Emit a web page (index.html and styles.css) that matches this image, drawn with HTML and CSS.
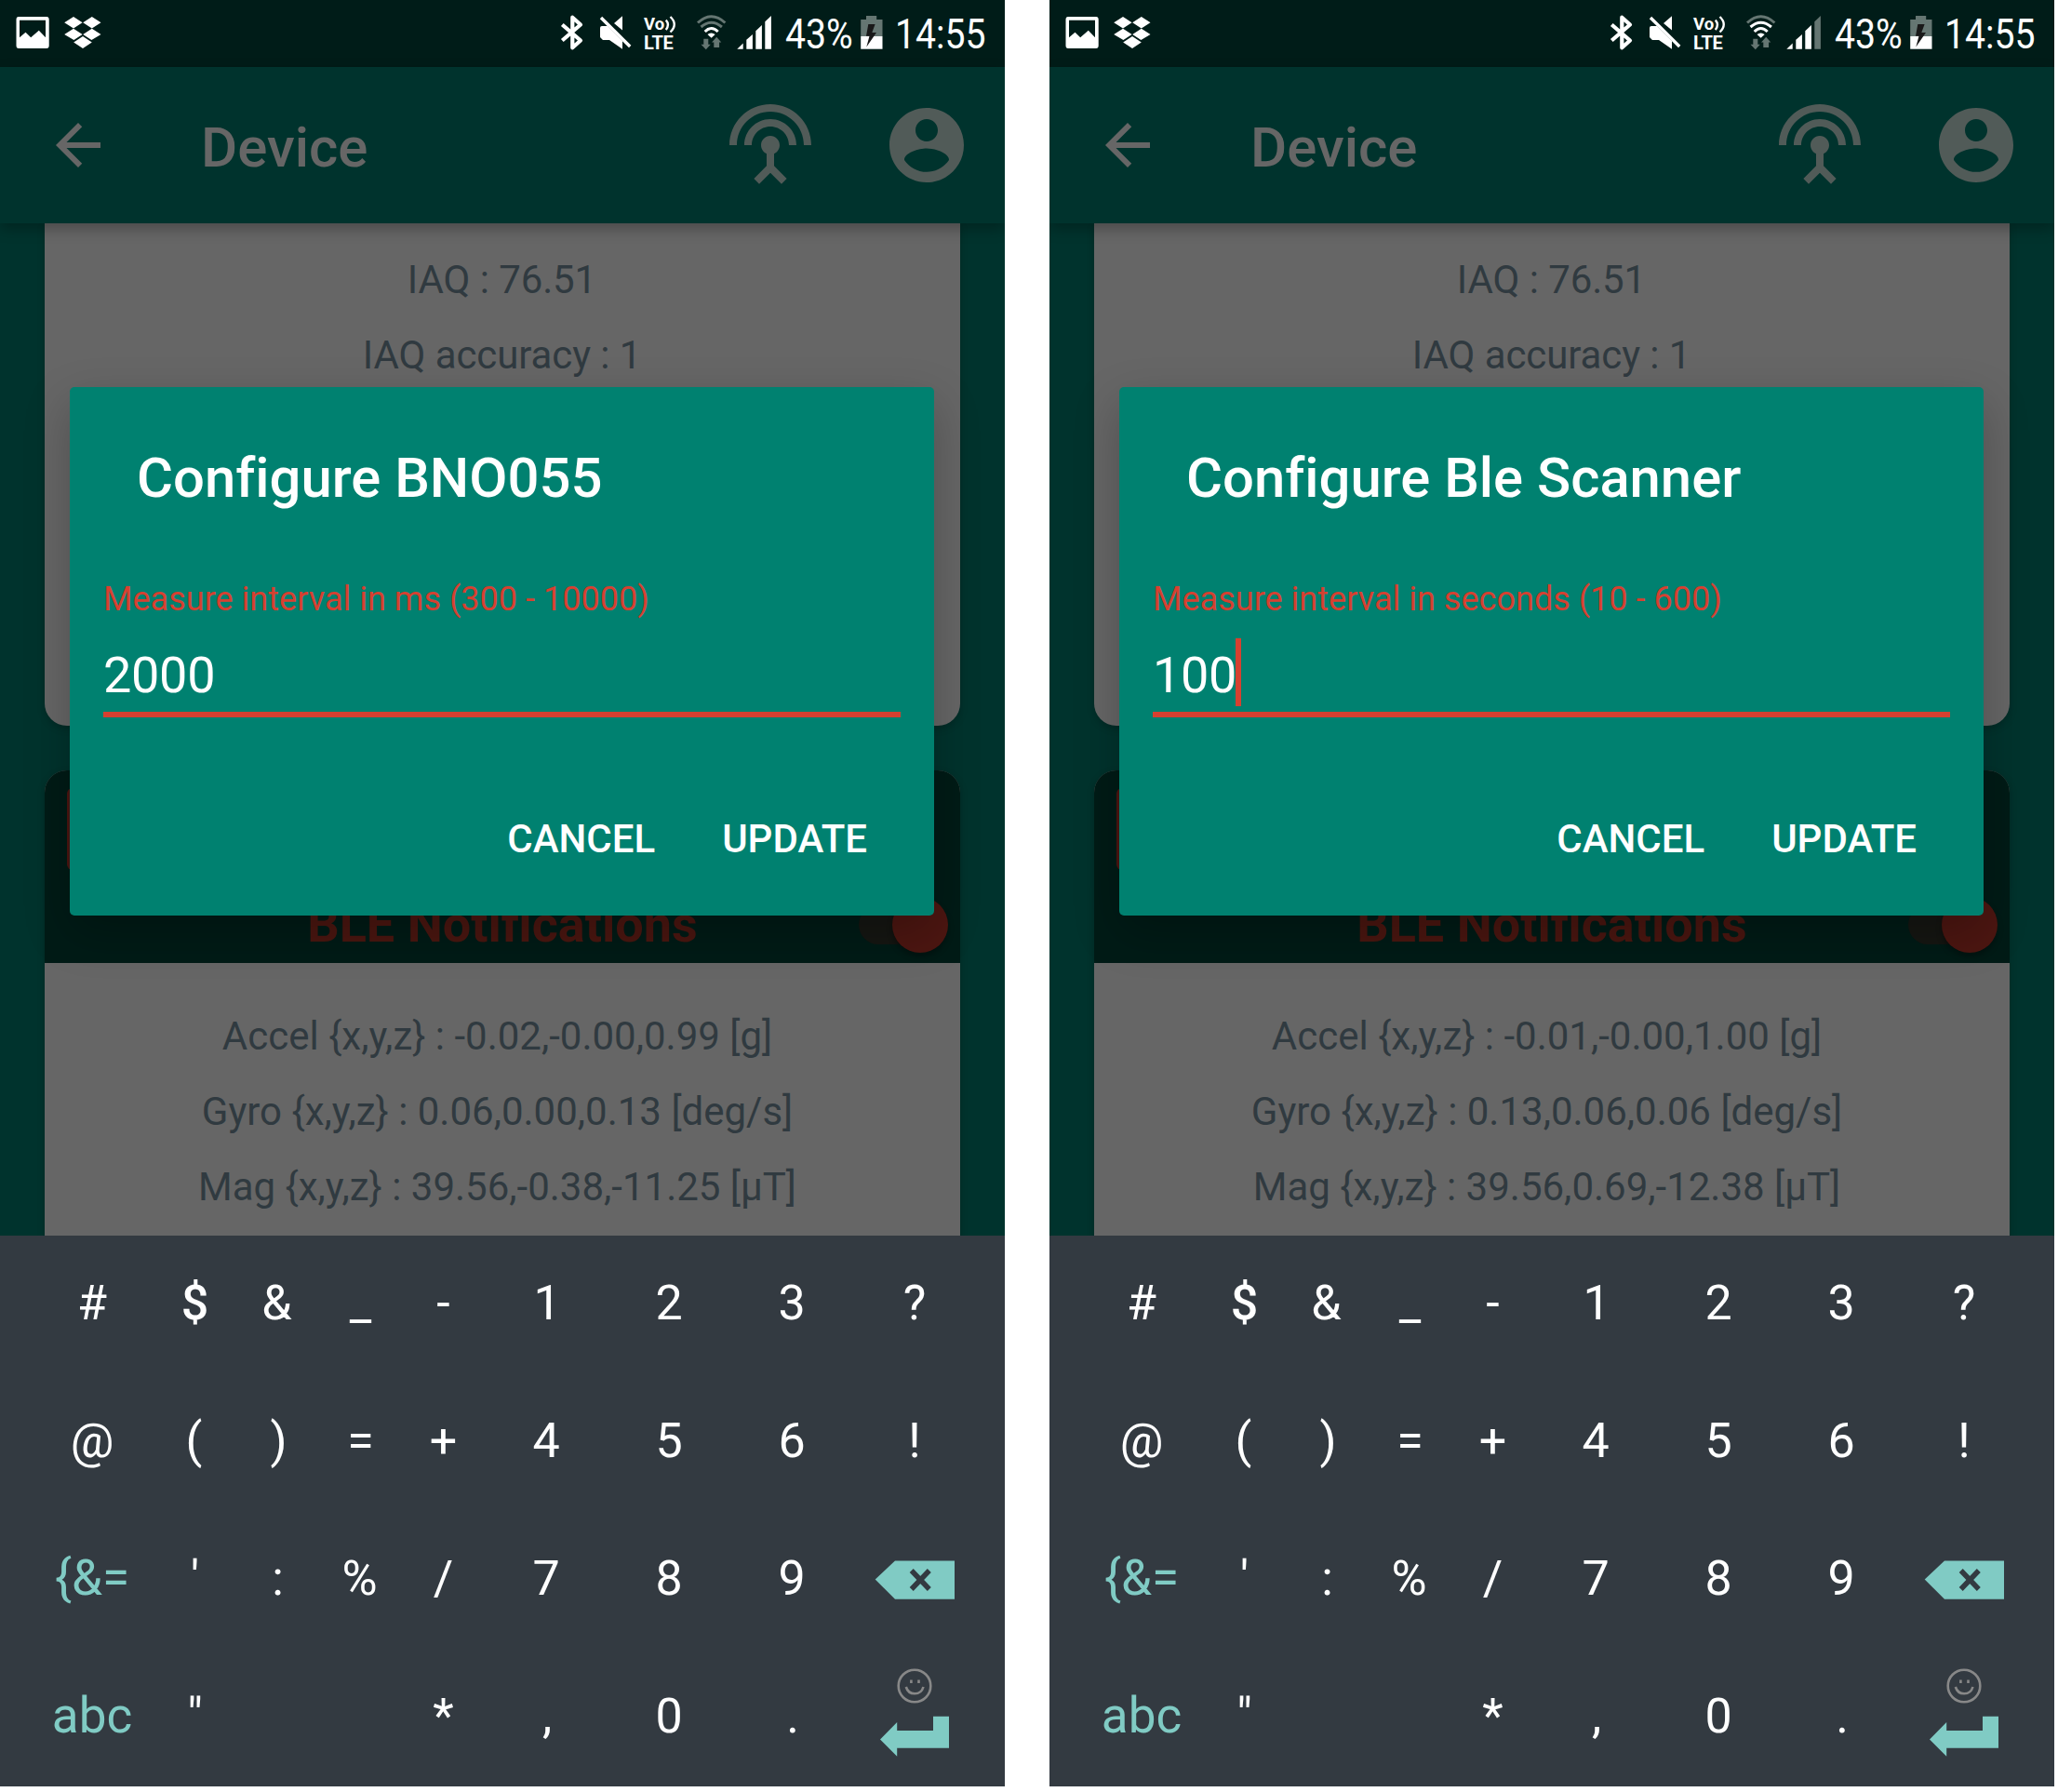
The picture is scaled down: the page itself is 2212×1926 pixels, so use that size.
FILE: index.html
```
<!DOCTYPE html>
<html lang="en">
<head>
<meta charset="utf-8">
<title>Device</title>
<link rel="stylesheet" href="styles.css">
</head>
<body>
<svg class="sprite" aria-hidden="true">
  <symbol id="notif" viewBox="0 0 120 72">
    <path fill-rule="evenodd" d="M20 18H50Q52.7 18 52.7 21V49Q52.7 52 50 52H20Q17.5 52 17.5 49V21Q17.5 18 20 18ZM21 21.7V40.3L27.5 34.7L33.2 40.3L41.8 32.7L49 40.3V21.7Z"/>
    <path d="M79 18L88.6 24.3L79 30.6L69.2 24.3ZM98.8 18L108.5 24.3L98.8 30.6L89.2 24.3ZM79 30.8L88.6 37L79.4 43L69.2 37ZM98.8 30.8L108.5 37L98.4 43L89.2 37ZM89 39L98.8 45.5L89 52L79.2 45.5Z"/>
  </symbol>
  <symbol id="bt" viewBox="596 0 40 72">
    <path fill="none" stroke="currentColor" stroke-width="4.2" stroke-linejoin="round" d="M604.3 26.500L624 43.500L615.300 51.300V18.700L624 26.500L604.3 43.500"/>
  </symbol>
  <symbol id="mute" viewBox="636 0 50 72">
    <path d="M669 17.3V32.6L660 25ZM645 30Q645 28 647 28H653L669 44V52.7L655 43H648L645 40Z"/>
    <path fill="none" stroke="currentColor" stroke-width="3.4" d="M646 19L677.2 50"/>
  </symbol>
  <symbol id="wifi" viewBox="740 0 48 72">
    <g fill="none" stroke-width="3">
      <path class="dim-line" d="M750 24.500Q764.6 11 779.4 24.500"/>
      <path class="wifi-mid" d="M753.500 29Q764.6 19.500 775.900 29"/>
      <path stroke="currentColor" d="M757.700 34Q764.6 27 771.700 34"/>
    </g>
    <path d="M764.6 40.700L760.500 37Q764.6 33.800 768.700 37Z"/>
    <path class="dim" d="M756.300 41.700H761.300V47.700H763.800L758.800 53.300L753.500 47.700H756.300ZM767.300 51V45.500H765L770.200 39.700L775.300 45.500H773.100V51Z"/>
  </symbol>
  <symbol id="signal" viewBox="788 0 48 72">
    <path d="M792.300 52.700L798.700 46.500V52.700ZM802.300 52.700V42.700L808.900 37V52.700ZM812.300 52.700V33.300L818.900 27V52.700Z"/>
    <path class="bar4" d="M822.300 52.700V23.300L828.900 17V52.700Z"/>
  </symbol>
  <symbol id="battery" viewBox="920 0 34 72">
    <path class="dim" d="M931 17H942.200V21H948.500V39H925.200V21H931Z"/>
    <path d="M925.200 39H948.500V52.700H925.200Z"/>
    <path class="bolt" d="M933.300 26H940.600L937.300 35H942L931.300 50.500L934.500 38.700H931Z"/>
  </symbol>
  <symbol id="back" viewBox="0 0 24 24"><path d="M20 11H7.83l5.59-5.59L12 4l-8 8 8 8 1.41-1.41L7.83 13H20v-2z"/></symbol>
  <symbol id="antenna" viewBox="0 0 24 24"><path d="M12 5c-3.87 0-7 3.130-7 7h2c0-2.760 2.240-5 5-5s5 2.240 5 5h2c0-3.870-3.130-7-7-7zm1 9.290c.880-.390 1.500-1.260 1.500-2.290 0-1.380-1.120-2.500-2.500-2.500S9.500 10.620 9.500 12c0 1.020.620 1.900 1.500 2.290v3.300L7.590 21 9 22.410l3-3 3 3L16.410 21 13 17.590v-3.300zM12 1C5.930 1 1 5.930 1 12h2c0-4.970 4.030-9 9-9s9 4.030 9 9h2c0-6.070-4.930-11-11-11z"/></symbol>
  <symbol id="account" viewBox="0 0 24 24"><path d="M12 2C6.480 2 2 6.480 2 12s4.480 10 10 10 10-4.480 10-10S17.520 2 12 2zm0 3c1.660 0 3 1.340 3 3s-1.340 3-3 3-3-1.340-3-3 1.340-3 3-3zm0 14.200c-2.500 0-4.710-1.280-6-3.220.030-1.990 4-3.080 6-3.080 1.990 0 5.970 1.090 6 3.080-1.290 1.940-3.500 3.220-6 3.220z"/></symbol>
  <symbol id="backspace" viewBox="917 1624 132 148">
    <path d="M940.700 1697.500L962 1677.500H1026V1718.700H962Z"/>
    <path class="cross" d="M979.700 1688L998.800 1708M998.800 1688L979.700 1708"/>
  </symbol>
  <symbol id="enter" viewBox="917 1772 132 148">
    <path d="M946 1869.500L964.200 1851V1860H1003V1844.700H1020V1878.700H964.200V1887.700Z"/>
    <g class="smile">
      <circle cx="983" cy="1812" r="17.300"/>
      <path d="M979.400 1805.500V1809M987.500 1805.500V1809M973.800 1813Q976 1820.300 983.200 1820.300T992.500 1813"/>
    </g>
  </symbol>
</svg>

<main class="screens">
  <section class="phone">
    <header class="status">
      <svg class="st-notif"><use href="#notif"/></svg>
      <span class="spacer"></span>
      <svg class="st-bt"><use href="#bt"/></svg>
      <svg class="st-mute"><use href="#mute"/></svg>
      <div class="volte">
        <div class="vo">Vo<svg viewBox="716 16 12 20"><path d="M716.800 21.500Q721 26.500 716.800 32M721.500 18Q730 26 721.500 34.500"/></svg></div>
        <div class="lte">LTE</div>
      </div>
      <svg class="st-wifi"><use href="#wifi"/></svg>
      <svg class="st-signal"><use href="#signal"/></svg>
      <span class="percent"><span class="condensed">43%</span></span>
      <svg class="st-battery"><use href="#battery"/></svg>
      <span class="time"><span class="condensed">14:55</span></span>
    </header>
    <nav class="appbar">
      <svg class="back"><use href="#back"/></svg>
      <h1>Device</h1>
      <svg class="action"><use href="#antenna"/></svg>
      <svg class="action"><use href="#account"/></svg>
    </nav>
    <div class="content">
      <article class="card card-air">
        <p>IAQ : 76.51</p>
        <p>IAQ accuracy : 1</p>
      </article>
      <article class="card card-motion">
        <div class="card-head">
          <span class="chip"></span>
          <div class="notify">
            <h2>BLE Notifications</h2>
            <span class="toggle"><span class="thumb"></span></span>
          </div>
        </div>
        <div class="card-body">
          <p>Accel {x,y,z} : -0.02,-0.00,0.99 [g]</p>
          <p>Gyro {x,y,z} : 0.06,0.00,0.13 [deg/s]</p>
          <p>Mag {x,y,z} : 39.56,-0.38,-11.25 [µT]</p>
        </div>
      </article>
    </div>
    <div class="keyboard">
      <span>#</span><span class="mid">$</span><span class="nudge-left">&amp;</span><span>_</span><span>-</span><span class="nudge-right">1</span><span>2</span><span>3</span><span>?</span>
      <span>@</span><span class="nudge-left">(</span><span class="nudge-right">)</span><span>=</span><span>+</span><span>4</span><span>5</span><span>6</span><span>!</span>
      <span class="fn">{&amp;=</span><span>'</span><span>:</span><span class="nudge-left">%</span><span>/</span><span>7</span><span>8</span><span>9</span><svg><use href="#backspace"/></svg>
      <span class="fn">abc</span><span>"</span><span></span><span></span><span>*</span><span class="nudge-right">,</span><span>0</span><span class="nudge-right">.</span><svg><use href="#enter"/></svg>
    </div>
    <div class="dialog">
      <h2>Configure BNO055</h2>
      <label>Measure interval in ms (300 - 10000)</label>
      <div class="field">2000</div>
      <div class="buttons"><span>CANCEL</span><span>UPDATE</span></div>
    </div>
  </section>

  <section class="phone phone-scanner">
    <header class="status">
      <svg class="st-notif"><use href="#notif"/></svg>
      <span class="spacer"></span>
      <svg class="st-bt"><use href="#bt"/></svg>
      <svg class="st-mute"><use href="#mute"/></svg>
      <div class="volte">
        <div class="vo">Vo<svg viewBox="716 16 12 20"><path d="M716.800 21.500Q721 26.500 716.800 32M721.500 18Q730 26 721.500 34.500"/></svg></div>
        <div class="lte">LTE</div>
      </div>
      <svg class="st-wifi"><use href="#wifi"/></svg>
      <svg class="st-signal"><use href="#signal"/></svg>
      <span class="percent"><span class="condensed">43%</span></span>
      <svg class="st-battery"><use href="#battery"/></svg>
      <span class="time"><span class="condensed">14:55</span></span>
    </header>
    <nav class="appbar">
      <svg class="back"><use href="#back"/></svg>
      <h1>Device</h1>
      <svg class="action"><use href="#antenna"/></svg>
      <svg class="action"><use href="#account"/></svg>
    </nav>
    <div class="content">
      <article class="card card-air">
        <p>IAQ : 76.51</p>
        <p>IAQ accuracy : 1</p>
      </article>
      <article class="card card-motion">
        <div class="card-head">
          <span class="chip"></span>
          <div class="notify">
            <h2>BLE Notifications</h2>
            <span class="toggle"><span class="thumb"></span></span>
          </div>
        </div>
        <div class="card-body">
          <p>Accel {x,y,z} : -0.01,-0.00,1.00 [g]</p>
          <p>Gyro {x,y,z} : 0.13,0.06,0.06 [deg/s]</p>
          <p>Mag {x,y,z} : 39.56,0.69,-12.38 [µT]</p>
        </div>
      </article>
    </div>
    <div class="keyboard">
      <span>#</span><span class="mid">$</span><span class="nudge-left">&amp;</span><span>_</span><span>-</span><span class="nudge-right">1</span><span>2</span><span>3</span><span>?</span>
      <span>@</span><span class="nudge-left">(</span><span class="nudge-right">)</span><span>=</span><span>+</span><span>4</span><span>5</span><span>6</span><span>!</span>
      <span class="fn">{&amp;=</span><span>'</span><span>:</span><span class="nudge-left">%</span><span>/</span><span>7</span><span>8</span><span>9</span><svg><use href="#backspace"/></svg>
      <span class="fn">abc</span><span>"</span><span></span><span></span><span>*</span><span class="nudge-right">,</span><span>0</span><span class="nudge-right">.</span><svg><use href="#enter"/></svg>
    </div>
    <div class="dialog">
      <h2>Configure Ble Scanner</h2>
      <label>Measure interval in seconds (10 - 600)</label>
      <div class="field">100<i class="caret"></i></div>
      <div class="buttons"><span>CANCEL</span><span>UPDATE</span></div>
    </div>
  </section>
</main>
</body>
</html>
```
FILE: styles.css
```
* { box-sizing: border-box; margin: 0; padding: 0; }

body {
  background: #fff;
  font-family: Roboto, "Liberation Sans", sans-serif;
  overflow: hidden;
}

svg { display: block; flex: none; fill: currentColor; }
.sprite { position: absolute; width: 0; height: 0; }

.screens { display: flex; gap: 48px; }

.phone {
  --wifi-mid: #657672;
  --bar4: #fff;
  position: relative;
  display: flex;
  flex-direction: column;
  flex: none;
  width: 1080px;
  height: 1920px;
  overflow: hidden;
  background: #00332d;
}
.phone-scanner { --wifi-mid: #fff; --bar4: #657672; }

/* Status bar */
.status {
  display: flex;
  flex: none;
  height: 72px;
  padding-right: 12px;
  background: #001c18;
  color: #fff;
}
.status > svg { height: 72px; }
.spacer { flex: 1; }
.st-notif { width: 120px; }
.st-bt { width: 40px; }
.st-mute { width: 50px; }
.st-wifi, .st-signal { width: 48px; }
.st-battery { width: 34px; }
.percent { width: 84px; padding-left: 8px; }
.time { width: 114px; padding-left: 8px; }
.condensed {
  display: inline-block;
  font-size: 45px;
  line-height: 73px;
  transform: scaleX(.87);
  transform-origin: left;
}
.volte { width: 54px; padding: 14px 0 0 6px; font-weight: 700; }
.vo { display: flex; height: 22px; font-size: 18.5px; line-height: 24px; }
.vo svg {
  width: 12px;
  height: 20px;
  margin: 2px 0 0 1px;
  fill: none;
  stroke: #fff;
  stroke-width: 2.4;
}
.lte { font-size: 20px; line-height: 20px; letter-spacing: -.2px; }
.dim { fill: #657672; }
.dim-line { stroke: #657672; }
.wifi-mid { stroke: var(--wifi-mid); }
.bar4 { fill: var(--bar4); }
.bolt { fill: #191919; }

/* App bar */
.appbar {
  position: relative;
  z-index: 1;
  display: flex;
  align-items: center;
  flex: none;
  height: 168px;
  padding: 0 36px 0 48px;
  background: #00332d;
  color: #515b58;
  box-shadow: 0 6px 14px rgba(0, 0, 0, .28);
}
.appbar h1 {
  flex: 1;
  margin-left: 96px;
  color: #666;
  font-size: 60px;
  font-weight: 500;
  line-height: 70px;
  padding-top: 6px;
}
.back { width: 72px; height: 72px; color: #666; }
.action { width: 96px; height: 96px; }
.action + .action { margin-left: 72px; }

/* Cards */
.content {
  flex: none;
  height: 1088px;
  padding: 0 48px;
  overflow: hidden;
}
.card {
  background: #666;
  color: #303a40;
  font-size: 42px;
  line-height: 81px;
  text-align: center;
  box-shadow: 0 3px 8px rgba(0, 0, 0, .2);
}
.card-air {
  height: 540px;
  padding: 20px 1px 0 0;
  border-radius: 0 0 24px 24px;
  letter-spacing: -.1px;
}
.card-motion { height: 560px; margin-top: 48px; border-radius: 24px 24px 0 0; }
.card-head {
  display: flex;
  flex-direction: column;
  justify-content: space-between;
  height: 207px;
  padding: 19px 13px 11px 24px;
  border-radius: 24px 24px 0 0;
  background: #001b16;
}
.chip { width: 240px; height: 88px; border-radius: 6px; background: #4c1611; }
.notify { display: flex; align-items: center; height: 60px; }
.notify h2 {
  flex: 1;
  padding-left: 85px;
  color: #4a1610;
  font-size: 54px;
  font-weight: 700;
  line-height: 60px;
}
.toggle {
  display: flex;
  align-items: center;
  justify-content: flex-end;
  width: 96px;
  height: 42px;
  border-radius: 21px;
  background: #151612;
}
.thumb {
  flex: none;
  width: 60px;
  height: 60px;
  border-radius: 50%;
  background: #4c1611;
  box-shadow: 0 4px 6px rgba(0, 0, 0, .3);
}
.card-body { padding: 38px 11px 0 0; }

/* Keyboard */
.keyboard {
  position: relative;
  z-index: 1;
  display: grid;
  grid-template-columns: 132px repeat(4, 89px) repeat(4, 132px);
  grid-template-rows: repeat(4, 148px);
  flex: none;
  height: 592px;
  padding-left: 33px;
  background: #333a41;
  color: #fff;
  font-size: 52px;
  line-height: 145px;
  text-align: center;
}
.keyboard svg { width: 132px; height: 148px; color: #80cbc4; }
.keyboard .fn { color: #80cbc4; font-size: 53px; }
.mid { font-weight: 500; }
.nudge-left { padding-right: 2px; }
.nudge-right { padding-left: 2px; }
.cross { fill: none; stroke: #333a41; stroke-width: 5.5; }
.smile { fill: none; stroke: #888; stroke-width: 2.6; }

/* Dialog over the dimmed page */
.dialog {
  position: absolute;
  top: 416px;
  left: 75px;
  display: flex;
  flex-direction: column;
  width: 929px;
  height: 568px;
  padding: 63px 36px 0;
  border-radius: 5px;
  background: #008170;
  color: #fff;
  box-shadow: 0 18px 50px rgba(0, 0, 0, .23);
}
.dialog h2 {
  padding-left: 36px;
  font-size: 60px;
  font-weight: 500;
  line-height: 70px;
  letter-spacing: -.01px;
  font-variant-ligatures: common-ligatures;
  font-size: 59.8px;
}
.dialog label {
  margin-top: 74px;
  color: #d64030;
  font-size: 36.05px;
  line-height: 42px;
}
.field {
  display: flex;
  height: 85px;
  margin-top: 21px;
  border-bottom: 6px solid #d64030;
  font-size: 54px;
  line-height: 79px;
  letter-spacing: -.3px;
}
.caret { width: 6px; height: 73px; margin-left: -1px; background: #d64030; }
.buttons {
  display: flex;
  justify-content: flex-end;
  gap: 72px;
  margin-top: 107px;
  padding-right: 36px;
  font-size: 42px;
  font-weight: 500;
  line-height: 48px;
}
```
